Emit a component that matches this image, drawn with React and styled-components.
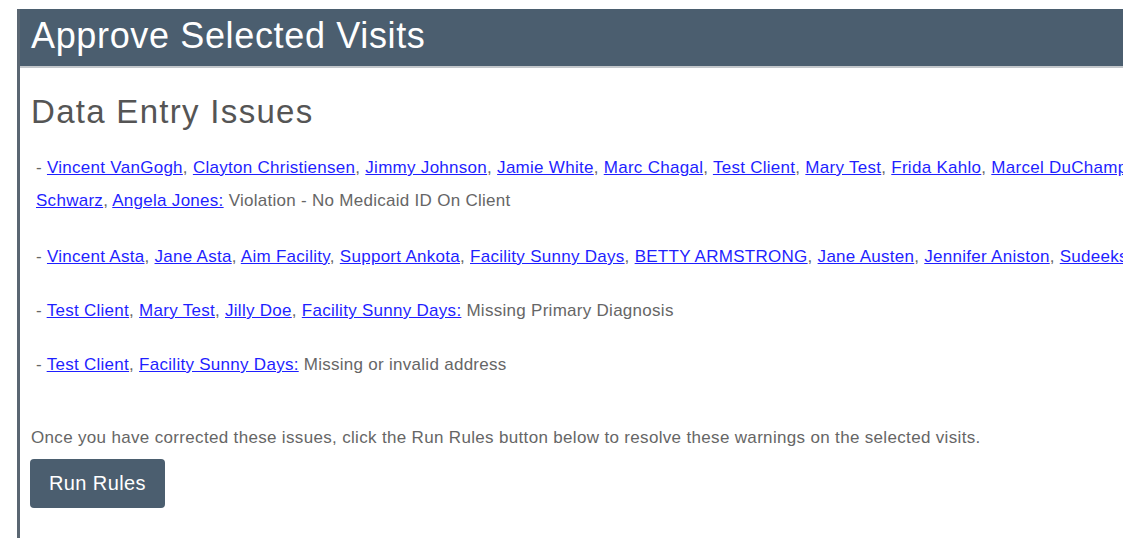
import React from 'react';
import styled, { createGlobalStyle } from 'styled-components';

const GlobalStyle = createGlobalStyle`
  html, body {
    margin: 0;
    padding: 0;
    background: #fff;
    overflow: hidden;
  }
  body {
    font-family: "Liberation Sans", Arial, sans-serif;
  }
`;

const Page = styled.div`
  padding: 9px 0 0 17px;
`;

const Panel = styled.div`
  box-sizing: border-box;
  width: 1363px;
  min-height: calc(100vh - 9px);
  border-left: 3px solid #5a6672;
`;

const Header = styled.div`
  box-sizing: border-box;
  display: flex;
  align-items: center;
  height: 59px;
  padding: 0 0 4px 11px;
  background: #4b5e6f;
  border-bottom: 2px solid #c3c7cb;
`;

const Title = styled.h1`
  margin: 0;
  font-size: 36px;
  line-height: 1;
  font-weight: 400;
  letter-spacing: 0.65px;
  color: #fff;
`;

const Content = styled.div`
  width: 1349px;
  padding-left: 11px;
`;

const Heading = styled.h2`
  margin: 27px 0 0;
  font-size: 33px;
  line-height: 34px;
  font-weight: 400;
  letter-spacing: 1.3px;
  color: #555;
`;

const IssueList = styled.ul`
  list-style: none;
  margin: 22px 0 0 5px;
  padding: 0;
`;

const Issue = styled.li`
  margin-bottom: ${p => (p.$first ? '23px' : '21px')};
  font-size: 17px;
  line-height: 33px;
  letter-spacing: 0.28px;
  color: #666;
`;

const ClientLink = styled.a`
  color: #1f1fff;
  text-decoration: underline;
  cursor: pointer;
`;

const Note = styled.p`
  margin: 45px 0 0;
  font-size: 17px;
  line-height: 24px;
  letter-spacing: 0.33px;
  color: #666;
`;

const RunButton = styled.button`
  margin: 9px 0 0 -1px;
  height: 49px;
  padding: 0 19px;
  border: none;
  border-radius: 4px;
  background: #4b5e6f;
  color: #fff;
  font-family: inherit;
  font-size: 20px;
  letter-spacing: 0.4px;
  cursor: pointer;
`;

const issues = [
  {
    names: ['Vincent VanGogh', 'Clayton Christiensen', 'Jimmy Johnson', 'Jamie White', 'Marc Chagal', 'Test Client', 'Mary Test', 'Frida Kahlo', 'Marcel DuChamp', 'Georgia Okeeffe', 'Rebecca Schwarz', 'Angela Jones'],
    text: 'Violation - No Medicaid ID On Client',
  },
  {
    names: ['Vincent Asta', 'Jane Asta', 'Aim Facility', 'Support Ankota', 'Facility Sunny Days', 'BETTY ARMSTRONG', 'Jane Austen', 'Jennifer Aniston', 'Sudeeksha Rao'],
    text: 'Missing Gender',
  },
  {
    names: ['Test Client', 'Mary Test', 'Jilly Doe', 'Facility Sunny Days'],
    text: 'Missing Primary Diagnosis',
  },
  {
    names: ['Test Client', 'Facility Sunny Days'],
    text: 'Missing or invalid address',
  },
];

const App = () => {
  return (
    <Page>
      <GlobalStyle />
      <Panel>
        <Header>
          <Title>Approve Selected Visits</Title>
        </Header>
        <Content>
          <Heading>Data Entry Issues</Heading>
          <IssueList>
            {issues.map((issue, i) => (
              <Issue key={i} $first={i === 0}>
                {'- '}
                {issue.names.map((name, j) => {
                  const last = j === issue.names.length - 1;
                  return (
                    <React.Fragment key={j}>
                      <ClientLink>{last ? name + ':' : name}</ClientLink>
                      {last ? ' ' : ', '}
                    </React.Fragment>
                  );
                })}
                {issue.text}
              </Issue>
            ))}
          </IssueList>
          <Note>
            Once you have corrected these issues, click the Run Rules button below to resolve these warnings on the selected visits.
          </Note>
          <RunButton>Run Rules</RunButton>
        </Content>
      </Panel>
    </Page>
  );
};

export default App;
